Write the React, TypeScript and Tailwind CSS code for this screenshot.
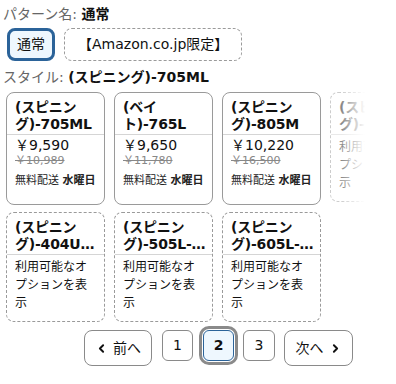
import React from 'react';
import { ChevronLeft, ChevronRight } from 'lucide-react';

type Style = {
  name: string;
  price?: string;
  listPrice?: string;
  available: boolean;
};

const styles: Style[] = [
  { name: '(スピニング)-705ML', price: '￥9,590', listPrice: '￥10,989', available: true },
  { name: '(ベイト)-765L', price: '￥9,650', listPrice: '￥11,780', available: true },
  { name: '(スピニング)-805M', price: '￥10,220', listPrice: '￥16,500', available: true },
  { name: '(スピニング)-605L-ソリッド', available: false },
  { name: '(スピニング)-404UL-ソリッド', available: false },
  { name: '(スピニング)-505L-ソリッド', available: false },
  { name: '(スピニング)-605L-ソリッド', available: false },
];

const StyleCard: React.FC<{ s: Style; faded?: boolean }> = ({ s, faded }) => {
  const border = s.available ? 'border border-solid border-[#9a9a9a]' : 'border border-dashed border-[#9a9a9a]';
  return (
    <div className={`${border} rounded-lg bg-white ${faded ? 'opacity-50' : ''} ${s.available ? 'h-[113px]' : 'h-[110px]'}`}>
      <div className="pl-2 pr-[6px] pt-[6px] pb-[1px] border-b border-[#d5d5d5]">
        <div className="font-bold text-[14px] leading-[17px] tracking-[-0.2px] line-clamp-2 break-words">{s.name}</div>
      </div>
      {s.available ? (
        <div className="px-2 pt-[1px]">
          <div className="text-[14px] leading-[18px]">{s.price}</div>
          <div className="text-[11px] leading-[13px] text-[#888] line-through">{s.listPrice}</div>
          <div className="text-[11px] leading-[14px] mt-[7px] text-[#222]">
            無料配送 <span className="font-bold">水曜日</span>
          </div>
        </div>
      ) : (
        <div className="px-2 pt-[3px] text-[12px] leading-[18px]">利用可能なオプションを表示</div>
      )}
    </div>
  );
};

export default function App() {
  return (
    <div
      className="w-[396px] h-[384px] overflow-hidden bg-white text-[#111] px-[3px] pt-[4px]"
      style={{ fontFamily: '"DejaVu Sans", "Noto Sans CJK JP", sans-serif' }}
    >
      <div className="text-[14px] leading-[20px]">
        <span className="text-[#666]">パターン名: </span>
        <span className="font-bold">通常</span>
      </div>

      <div className="flex gap-[9px] mt-[4px] ml-[4px]">
        <button className="h-[33px] w-[48px] rounded-lg border-[3px] border-[#2b6399] bg-[#eef7fe] text-[14px] flex items-center justify-center">
          通常
        </button>
        <button className="h-[33px] px-[13px] rounded-lg border border-dashed border-[#9a9a9a] bg-white text-[14px] flex items-center">
          【Amazon.co.jp限定】
        </button>
      </div>

      <div className="text-[14px] leading-[20px] mt-[6px]">
        <span className="text-[#666]">スタイル: </span>
        <span className="font-bold">(スピニング)-705ML</span>
      </div>

      <div className="relative w-[359px] overflow-hidden ml-[3px] mt-[5px]">
        <div className="grid grid-cols-[99px_99px_99px_99px] gap-x-[9px] gap-y-[7px] w-[423px]">
          {styles.map((s, i) => (
            <StyleCard key={i} s={s} faded={i === 3} />
          ))}
        </div>
        <div className="absolute top-0 right-0 h-[113px] w-[24px] bg-gradient-to-r from-white/0 to-white" />
      </div>

      <div className="flex items-start ml-[81px] mt-[8px] text-[14px]">
        <button className="h-[36px] w-[68px] rounded-lg border border-[#8a8a8a] bg-white flex items-center justify-center gap-[5px]">
          <ChevronLeft size={13} strokeWidth={3.5} />
          <span>前へ</span>
        </button>
        <button className="ml-[10px] h-[31px] w-[31px] rounded-md border border-[#8a8a8a] bg-white flex items-center justify-center">
          1
        </button>
        <button className="ml-[10px] h-[31px] w-[31px] rounded-md border border-[#2b6399] bg-[#eef7fe] font-bold flex items-center justify-center outline-[3px] outline-solid outline-[#8a8a8a] outline-offset-[1px]">
          2
        </button>
        <button className="ml-[9px] h-[31px] w-[32px] rounded-md border border-[#8a8a8a] bg-white flex items-center justify-center">
          3
        </button>
        <button className="ml-[9px] h-[36px] w-[69px] rounded-lg border border-[#8a8a8a] bg-white flex items-center justify-center gap-[5px]">
          <span>次へ</span>
          <ChevronRight size={13} strokeWidth={3.5} />
        </button>
      </div>
    </div>
  );
}
